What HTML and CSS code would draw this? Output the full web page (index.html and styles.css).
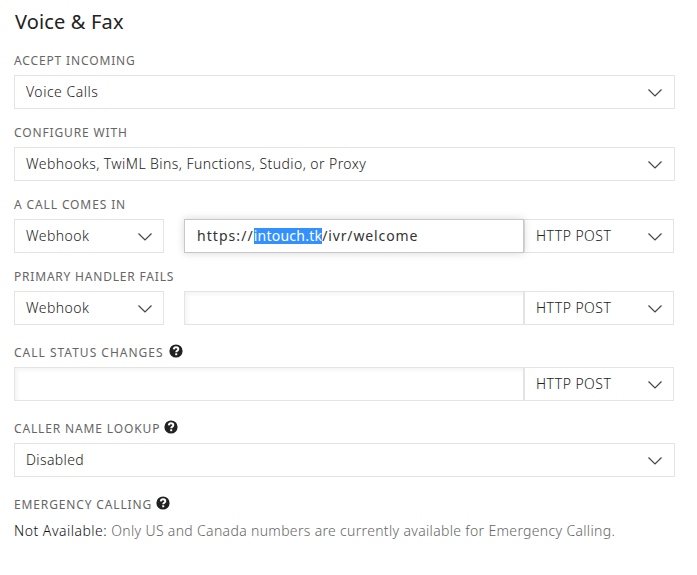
FILE: index.html
```html
<!DOCTYPE html>
<html lang="en">
<head>
<meta charset="utf-8">
<title>Voice &amp; Fax</title>
<link rel="stylesheet" href="styles.css">
</head>
<body>
<svg width="0" height="0" class="defs">
  <symbol id="chevron" viewBox="0 0 16 10"><path d="M1.500 1.500 8 8 14.500 1.500"/></symbol>
  <symbol id="help" viewBox="0 0 14 14"><circle cx="7" cy="7" r="6.6" fill="#222"/><path d="M4.8 5.4C4.9 3.9 5.8 3.3 7 3.3c1.400 0 2.300.8 2.300 1.900 0 1.500-2.100 1.600-2.100 3.100" fill="none" stroke="#fff" stroke-width="1.900"/><rect x="6.200" y="9.300" width="2" height="1.900" fill="#fff"/></symbol>
</svg>
<main class="panel">
  <h1 class="title">Voice &amp; Fax</h1>

  <section class="field">
    <div class="label"><span class="l-accept">ACCEPT INCOMING</span></div>
    <div class="select"><span class="v-voice">Voice Calls</span><svg class="chevron"><use href="#chevron"/></svg></div>
  </section>

  <section class="field">
    <div class="label"><span class="l-configure">CONFIGURE WITH</span></div>
    <div class="select"><span class="v-proxy">Webhooks, TwiML Bins, Functions, Studio, or Proxy</span><svg class="chevron"><use href="#chevron"/></svg></div>
  </section>

  <section class="field">
    <div class="label"><span class="l-call">A CALL COMES IN</span></div>
    <div class="row">
      <div class="select handler"><span class="v-webhook">Webhook</span><svg class="chevron"><use href="#chevron"/></svg></div>
      <div class="input focused"><span class="scheme">https://</span><mark>intouch.tk</mark><span class="path">/ivr/welcome</span></div>
      <div class="select method"><span class="v-post">HTTP POST</span><svg class="chevron"><use href="#chevron"/></svg></div>
    </div>
  </section>

  <section class="field">
    <div class="label"><span class="l-primary">PRIMARY HANDLER FAILS</span></div>
    <div class="row">
      <div class="select handler"><span class="v-webhook">Webhook</span><svg class="chevron"><use href="#chevron"/></svg></div>
      <div class="input"></div>
      <div class="select method"><span class="v-post">HTTP POST</span><svg class="chevron"><use href="#chevron"/></svg></div>
    </div>
  </section>

  <section class="field">
    <div class="label with-help"><span class="l-status">CALL STATUS CHANGES</span><svg class="help"><use href="#help"/></svg></div>
    <div class="row">
      <div class="input"></div>
      <div class="select method"><span class="v-post">HTTP POST</span><svg class="chevron"><use href="#chevron"/></svg></div>
    </div>
  </section>

  <section class="field">
    <div class="label with-help"><span class="l-lookup">CALLER NAME LOOKUP</span><svg class="help"><use href="#help"/></svg></div>
    <div class="select"><span class="v-disabled">Disabled</span><svg class="chevron"><use href="#chevron"/></svg></div>
  </section>

  <section class="field">
    <div class="label with-help"><span class="l-emergency">EMERGENCY CALLING</span><svg class="help"><use href="#help"/></svg></div>
    <p class="note"><span class="strong">Not Available:</span> Only US and Canada numbers are currently available for Emergency Calling.</p>
  </section>
</main>
</body>
</html>
```
FILE: styles.css
```css
* { box-sizing: border-box; }
body {
  margin: 0;
  background: #fff;
  color: #222;
  font: 14px/20px "Noto Sans", "Open Sans", sans-serif;
  font-weight: 300;
  letter-spacing: .45px;
}
.defs { position: absolute; }
.panel { width: 675px; padding: 8px 0 0 14px; }
.title {
  margin: 0 0 16px 1px;
  font-size: 20px;
  line-height: 28px;
  font-weight: 400;
  letter-spacing: .15px;
  color: #222;
}
.field { margin-bottom: 15px; }
.label {
  display: flex;
  align-items: center;
  height: 18px;
  margin-bottom: 5px;
  font-size: 12px;
  font-weight: 400;
  letter-spacing: .86px;
  color: #666;
  white-space: nowrap;
}
.label.with-help { margin-top: 19px; }
.l-call { letter-spacing: .88px; }
.l-status { letter-spacing: 1px; }
.l-primary { letter-spacing: .8px; }
.help { width: 14px; height: 14px; margin: -5px 0 0 4px; }
.l-status + .help { margin-left: 5px; }
.row { display: flex; width: 660px; }
.select, .input {
  display: flex;
  align-items: center;
  height: 34px;
  border: 1px solid #e4e4e4;
  background: #fff;
  white-space: nowrap;
}
.select { justify-content: space-between; padding: 0 11px; }
.handler { width: 150px; margin-right: 20px; }
.method { width: 150px; }
.input {
  flex: 1;
  padding: 0 13px 0 12px;
  box-shadow: inset 2px 2px 4px rgba(0, 0, 0, .05);
}
.input.focused {
  position: relative;
  border-color: #c6c8c8;
  box-shadow: 0 0 8px rgba(0, 0, 0, .16);
  color: #333;
  font-weight: 400;
}
.scheme { letter-spacing: 1.05px; }
.path { letter-spacing: .87px; }
mark {
  height: 16px;
  line-height: 16px;
  letter-spacing: .24px;
  background: #3390ff;
  color: #fff;
}
.v-voice { letter-spacing: .5px; }
.v-proxy { letter-spacing: .42px; }
.v-disabled { letter-spacing: .38px; }
.chevron {
  width: 16px;
  height: 10px;
  margin-top: 2px;
  fill: none;
  stroke: #444;
  stroke-width: 1.2;
}
.handler .chevron, .method .chevron { margin-right: -.5px; }
.note { margin: 7px 0 0; letter-spacing: .33px; color: #666; white-space: nowrap; }
.strong { letter-spacing: .5px; color: #111; }
```
